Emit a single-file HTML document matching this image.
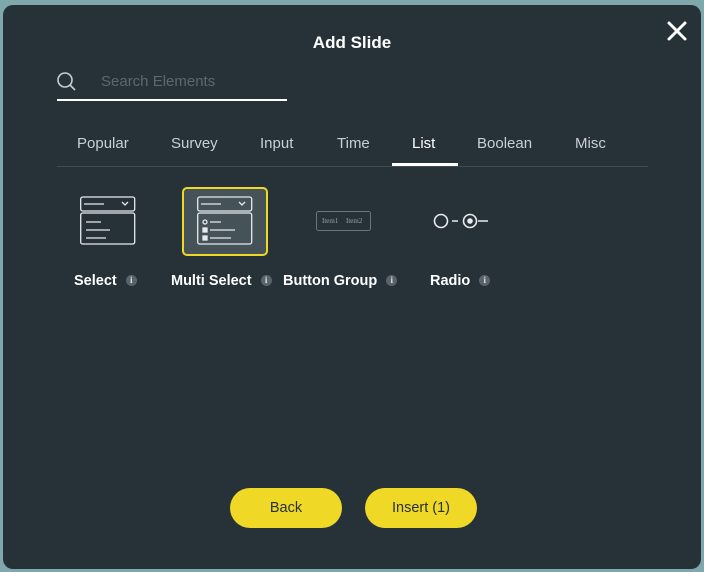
<!DOCTYPE html>
<html><head><style>
body{margin:0;width:704px;height:572px;background:#7ea8ab;font-family:"Liberation Sans",sans-serif;position:relative;overflow:hidden}
.dlg{position:absolute;left:3px;top:5px;width:698px;height:564px;background:#263238;border-radius:10px}
.a{position:absolute}
.t{color:#fff;font-weight:bold;font-size:16px}
.tab{position:absolute;top:135px;color:#c9cfd2;font-size:15px}
.lbl{position:absolute;top:273px;color:#fff;font-weight:bold;font-size:14.5px;white-space:nowrap}
.i{display:inline-block;width:11px;height:11px;border-radius:50%;background:#5a6468;color:#dfe3e5;font-size:9px;text-align:center;line-height:11px;vertical-align:2px;margin-left:9px;font-family:"Liberation Serif",serif;font-weight:bold}
.btn{position:absolute;top:488px;width:112px;height:40px;border-radius:20px;background:#f0d826;color:#263238;font-size:14.5px;text-align:center;line-height:41px}
</style></head><body>
<div class="dlg"></div>
<div class="a t" style="left:0;width:704px;text-align:center;top:33px;font-size:17px">Add Slide</div>
<svg class="a" style="left:666px;top:20px" width="22" height="22"><path d="M3 3L19 19M19 3L3 19" stroke="#fff" stroke-width="3" stroke-linecap="round"/></svg>
<svg class="a" style="left:56px;top:71px" width="22" height="22"><circle cx="9" cy="9" r="7" stroke="#c9cfd2" stroke-width="1.6" fill="none"/><path d="M14 14L19 19" stroke="#c9cfd2" stroke-width="1.6"/></svg>
<div class="a" style="left:101px;top:73px;color:#5d686c;font-size:15px">Search Elements</div>
<div class="a" style="left:57px;top:99px;width:230px;height:2px;background:#fff"></div>
<div class="tab" style="left:77px">Popular</div>
<div class="tab" style="left:171px">Survey</div>
<div class="tab" style="left:260px">Input</div>
<div class="tab" style="left:337px">Time</div>
<div class="tab" style="left:412px;color:#fff">List</div>
<div class="tab" style="left:477px">Boolean</div>
<div class="tab" style="left:575px">Misc</div>
<div class="a" style="left:57px;top:166px;width:591px;height:1px;background:#414b50"></div>
<div class="a" style="left:392px;top:163px;width:66px;height:3px;background:#fff"></div>
<svg class="a" style="left:80px;top:196px" width="56" height="50" fill="none" stroke="#e8eaeb" stroke-width="1.3"><rect x="0.7" y="1" width="54" height="14" rx="2"/><path d="M4 8H24M42 6l3 3 3-3"/><rect x="0.7" y="17" width="54" height="31" rx="2"/><path d="M6 26H21M6 34H30M6 42H26"/></svg>
<div class="a" style="left:182px;top:187px;width:82px;height:65px;border:2px solid #f0d826;border-radius:5px;background:#455257"></div>
<svg class="a" style="left:197px;top:196px" width="56" height="50" fill="none" stroke="#e8eaeb" stroke-width="1.3"><rect x="0.7" y="1" width="54" height="14" rx="2"/><path d="M4 8H24M42 6l3 3 3-3"/><rect x="0.7" y="17" width="54" height="31" rx="2"/><circle cx="8" cy="26" r="2"/><rect x="6" y="32" width="4" height="4" fill="#e8eaeb"/><rect x="6" y="40" width="4" height="4" fill="#e8eaeb"/><path d="M13 26H24M13 34H38M13 42H34"/></svg>
<svg class="a" style="left:316px;top:211px" width="56" height="20"><rect x="0.5" y="0.5" width="54" height="19" rx="2" fill="none" stroke="#6b7579"/><text x="6" y="12" font-size="7" fill="#9aa3a6" font-family="Liberation Serif">Item1</text><text x="30" y="12" font-size="7" fill="#9aa3a6" font-family="Liberation Serif">Item2</text></svg>
<svg class="a" style="left:432px;top:211px" width="60" height="20" fill="none" stroke="#e8eaeb" stroke-width="1.6"><circle cx="9" cy="10" r="6.5"/><path d="M20 10H26M46 10H56"/><circle cx="38" cy="10" r="6.5"/><circle cx="38" cy="10" r="2" fill="#e8eaeb"/></svg>
<div class="lbl" style="left:74px">Select<span class="i">i</span></div>
<div class="lbl" style="left:171px">Multi Select<span class="i">i</span></div>
<div class="lbl" style="left:283px">Button Group<span class="i">i</span></div>
<div class="lbl" style="left:430px">Radio<span class="i">i</span></div>
<div class="btn" style="left:230px">Back</div>
<div class="btn" style="left:365px">Insert (1)</div>
</body></html>
